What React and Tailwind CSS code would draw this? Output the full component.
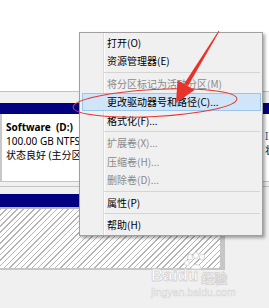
import React from "react";

const items = [
  { t: "打开(O)" },
  { t: "资源管理器(E)" },
  { sep: true },
  { t: "将分区标记为活动分区(M)", off: true },
  { t: "更改驱动器号和路径(C)...", hot: true },
  { t: "格式化(F)..." },
  { sep: true },
  { t: "扩展卷(X)...", off: true },
  { t: "压缩卷(H)...", off: true },
  { t: "删除卷(D)...", off: true },
  { sep: true },
  { t: "属性(P)" },
  { sep: true },
  { t: "帮助(H)" },
];

const ContextMenu = () => (
  <div className="absolute left-[79px] top-[32px] w-[184px] border border-[#a0a0a0] bg-[#f0f0f0] pb-[1px] shadow-[2px_2px_3px_rgba(0,0,0,0.35)] font-['Noto_Sans_CJK_SC',sans-serif] text-[10px]">
    <div className="absolute left-[23px] top-0 bottom-0 w-px bg-[#dcdcdc]" />
    <div className="absolute left-[24px] top-0 bottom-0 w-px bg-white" />
    {items.map((it, i) =>
      it.sep ? (
        <div key={i} className="relative flex h-[4px] items-center">
          <div className="ml-[24px] mr-[2px] h-px flex-1 bg-[#d5d5d5]" />
        </div>
      ) : it.hot ? (
        <div
          key={i}
          className="relative ml-[2px] mr-[1px] flex h-[18.5px] items-center border border-[#9ac6ee] bg-[#d0e5f8] pl-[24px] text-black"
        >
          {it.t}
        </div>
      ) : (
        <div
          key={i}
          className={`relative flex h-[18.5px] items-center pl-[27px] ${
            it.off ? "text-[#8a8a8a]" : "text-black"
          }`}
        >
          {it.t}
        </div>
      )
    )}
  </div>
);

const Annotation = () => (
  <svg
    className="absolute left-0 top-0 pointer-events-none"
    width="269"
    height="308"
    viewBox="0 0 269 308"
  >
    <ellipse
      cx="155"
      cy="103"
      rx="82"
      ry="13.5"
      transform="rotate(-3 155 103)"
      fill="none"
      stroke="#e53935"
      strokeWidth="1"
    />
    <polygon points="218.6,30.7 219.4,31.3 188,86 184,84" fill="#e8332a" />
    <polygon points="177.5,80 194.5,90 176,103" fill="#e8332a" />
  </svg>
);

const Watermark = () => (
  <div className="absolute left-[151px] top-[251px] pointer-events-none select-none">
    <svg className="absolute left-[32px] top-[1px]" width="26" height="20" viewBox="0 0 26 20">
      <g fill="#fff" stroke="#d6d6d6" strokeWidth="1">
        <ellipse cx="7" cy="5" rx="2.5" ry="3" />
        <ellipse cx="13" cy="3.5" rx="2.5" ry="3" />
        <ellipse cx="19" cy="5" rx="2.5" ry="3" />
        <ellipse cx="4" cy="11" rx="2.3" ry="2.6" />
        <path d="M8 17 C8 11 18 11 18 17 Z" />
      </g>
    </svg>
    <div className="flex items-end pt-[17px]">
      <span className="font-['Liberation_Sans',sans-serif] text-[17px] font-bold leading-[16px] text-white [-webkit-text-stroke:0.8px_#d2d2d2]">
        Baidu
      </span>
      <span className="ml-[3px] font-['Noto_Sans_CJK_SC',sans-serif] text-[13px] font-bold leading-[13px] text-white [-webkit-text-stroke:0.8px_#d2d2d2]">
        经验
      </span>
    </div>
    <div className="mt-[3px] font-['Liberation_Sans',sans-serif] text-[10.5px] leading-[11px] text-white [-webkit-text-stroke:0.6px_#d8d8d8]">
      jingyan.baidu.com
    </div>
  </div>
);

export default function App() {
  return (
    <div className="relative h-[308px] w-[269px] overflow-hidden bg-[#f0f0f0] font-['Noto_Sans','Noto_Sans_CJK_SC',sans-serif]">
      <div className="h-[91px] bg-white" />
      {/* disk row 1 */}
      <div className="border-t border-[#c4c4c4]">
        <div className="h-[11px] bg-[#f0f0f0]" />
        <div className="h-[11px] bg-[#000080]" />
        <div className="flex h-[68px] border-b border-[#c4c4c4]">
          <div className="w-[2px] bg-[#c8c8c8]" />
          <div className="flex-1 bg-white pl-[4px] pt-[6px] text-[10px] leading-[14px] text-black">
            <div className="whitespace-pre font-bold">Software  (D:)</div>
            <div className="whitespace-nowrap">100.00 GB NTFS</div>
            <div className="whitespace-nowrap">状态良好 (主分区)</div>
          </div>
          <div className="w-[6px] bg-white pl-[2px] pt-[15px] text-[10px] leading-[14px] text-[#1a4fa0] overflow-hidden">
            <div>I</div>
            <div className="text-black">状</div>
          </div>
        </div>
        <div className="h-[4px] bg-[#f0f0f0]" />
      </div>
      {/* disk row 2 */}
      <div className="border-t border-[#c4c4c4] pt-[7px]">
        <div className="flex w-[225px] border-r border-[#c4c4c4]">
          <div className="flex-1">
            <div className="h-[13px] bg-[#000080]" />
            <div className="h-[2px] bg-[#b8b8b8]" />
            <div className="h-[61px] border-r-[4px] border-b-[2px] border-[#c6c6c6] bg-[repeating-linear-gradient(135deg,#b4b4b4_0_1px,#fff_1px_4px)]" />
          </div>
        </div>
      </div>
      <Watermark />
      <ContextMenu />
      <Annotation />
    </div>
  );
}
